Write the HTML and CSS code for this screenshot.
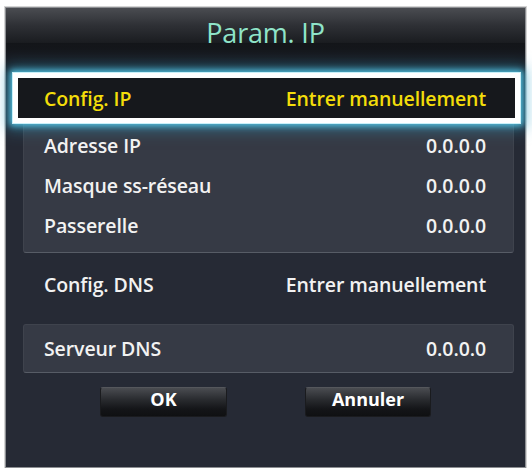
FILE: index.html
```html
<!DOCTYPE html>
<html lang="fr">
<head>
<meta charset="utf-8">
<title>Param. IP</title>
<link rel="stylesheet" href="styles.css">
</head>
<body>
<div class="panel">
  <div class="title">Param. IP</div>
  <div class="content">
    <div class="group">
      <div class="row focus"><span>Config. IP</span><span>Entrer manuellement</span></div>
      <div class="row sub first"><span>Adresse IP</span><span>0.0.0.0</span></div>
      <div class="row sub"><span>Masque ss-réseau</span><span>0.0.0.0</span></div>
      <div class="row sub"><span>Passerelle</span><span>0.0.0.0</span></div>
    </div>
    <div class="row plain"><span>Config. DNS</span><span>Entrer manuellement</span></div>
    <div class="group single">
      <div class="row sub tall"><span>Serveur DNS</span><span>0.0.0.0</span></div>
    </div>
    <div class="buttons">
      <div class="btn ok">OK</div>
      <div class="btn cancel">Annuler</div>
    </div>
  </div>
</div>
</body>
</html>
```

FILE: styles.css
```css
html, body {
  margin: 0;
  padding: 0;
  background: #ffffff;
}

body {
  font-family: "Open Sans", "DejaVu Sans", sans-serif;
  padding-top: 7px;
  padding-left: 5px;
}

.panel {
  box-sizing: border-box;
  width: 521px;
  height: 461px;
  border: 1px solid #8c8e92;
  box-shadow: 0 0 0 1px #d4d4d4;
  background: #262a35;
  display: flex;
  flex-direction: column;
}

.title {
  height: 35px;
  display: flex;
  justify-content: center;
  align-items: flex-end;
  line-height: 20px;
  font-size: 27px;
  font-weight: 400;
  letter-spacing: -0.2px;
  color: #8fe4c9;
  background: linear-gradient(#4a4c51 0%, #2e3035 50%, #1a1c20 100%);
}

.content {
  flex: 1;
  padding-top: 35px;
  background: linear-gradient(#131519 0px, #1d2028 28px, #262a35 60px);
}

.group {
  margin: 0 11px 0 17px;
  background: #363a45;
  border: 1px solid #3f434d;
  border-bottom-color: #575c66;
  border-radius: 3px;
  padding-bottom: 7px;
}

.group.single {
  margin-top: 20px;
  padding-bottom: 0;
}

.row {
  display: flex;
  justify-content: space-between;
  align-items: center;
  height: 40px;
  box-sizing: border-box;
  font-size: 19.5px;
  font-weight: 600;
  letter-spacing: -0.1px;
  color: #f2f2f2;
  white-space: nowrap;
}

.row.sub {
  padding: 0 27px 0 20px;
}

.row.sub.first {
  margin-top: 2px;
}

.row.tall {
  height: 47px;
}

.row.focus {
  height: 50px;
  margin: -6px -7px 0 -11px;
  border: 5px solid #ffffff;
  background: #16181c;
  color: #f3dd0a;
  padding: 0 29px 0 26px;
  box-shadow: 0 0 0 1px rgba(215, 248, 255, 0.9), 0 0 6px 3px rgba(90, 205, 235, 0.85), 0 0 14px 6px rgba(50, 160, 200, 0.55);
}

.row.plain {
  margin-top: 11px;
  padding: 0 39px 0 38px;
}

.buttons {
  display: flex;
  justify-content: center;
  gap: 78px;
  margin-top: 14px;
}

.btn {
  box-sizing: border-box;
  height: 30px;
  display: flex;
  justify-content: center;
  align-items: center;
  padding-bottom: 7px;
  font-size: 18px;
  font-weight: 700;
  color: #ffffff;
  border-radius: 3px;
  border: 1px solid #1a1b1e;
  border-top-color: #55575c;
  background: linear-gradient(#4a4c51 0%, #2a2c30 40%, #141518 75%, #0f1012 100%);
}

.btn.ok {
  width: 127px;
}

.btn.cancel {
  width: 126px;
}
```
